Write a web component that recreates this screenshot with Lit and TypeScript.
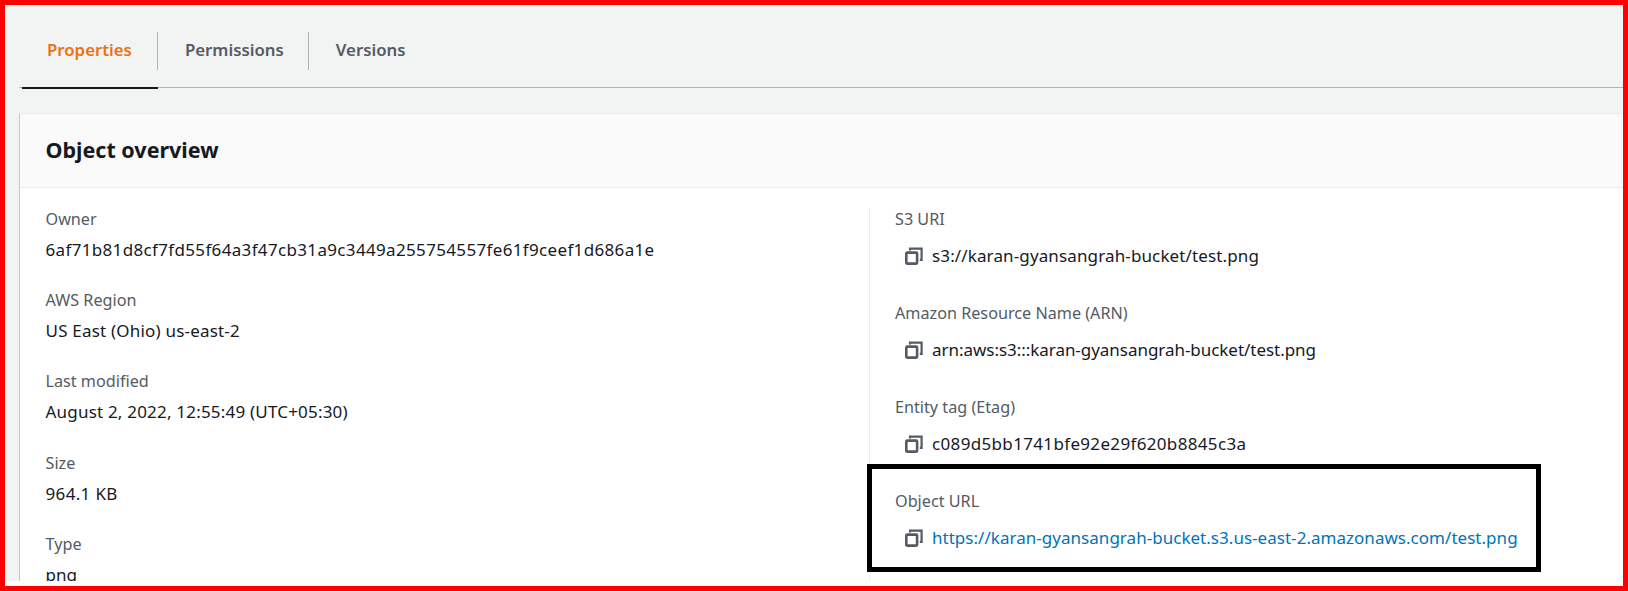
import { LitElement, html, css } from "lit";
import { customElement } from "lit/decorators.js";

const copyIcon = html`<svg class="copy" viewBox="0 0 18 18" width="18" height="18" fill="none" stroke="#545b64">
  <rect x="1.3" y="5.6" width="10.8" height="11" rx="1" stroke-width="2.6"></rect>
  <path d="M5 3.4V1.6h11.6V12.8h-1.8" stroke-width="2.2"></path>
</svg>`;

const left = [
  ["Owner", "6af71b81d8cf7fd55f64a3f47cb31a9c3449a255754557fe61f9ceef1d686a1e", "wide"],
  ["AWS Region", "US East (Ohio) us-east-2", "mid"],
  ["Last modified", "August 2, 2022, 12:55:49 (UTC+05:30)", "mid"],
  ["Size", "964.1 KB", "wide"],
  ["Type", "png", ""],
];
const right = [
  ["S3 URI", "s3://karan-gyansangrah-bucket/test.png", "slight", false],
  ["Amazon Resource Name (ARN)", "arn:aws:s3:::karan-gyansangrah-bucket/test.png", "tight", false],
  ["Entity tag (Etag)", "c089d5bb1741bfe92e29f620b8845c3a", "wide", false],
  ["Object URL", "https://karan-gyansangrah-bucket.s3.us-east-2.amazonaws.com/test.png", "", true],
] as const;

@customElement("app-root")
export class AppRoot extends LitElement {
  static styles = css`
    :host {
      display: block;
      font-family: "Noto Sans", "Open Sans", sans-serif;
      font-size: 17px;
      line-height: 22px;
      color: #16191f;
    }
    .frame {
      position: relative;
      box-sizing: border-box;
      width: 1628px;
      height: 591px;
      border: 5px solid #ff0000;
      background: #ffffff;
      overflow: hidden;
    }
    .panel {
      height: 576px;
      background: #f2f3f3;
      overflow: hidden;
      padding-left: 14px;
    }
    .tabs {
      display: flex;
      height: 82px;
      padding-left: 3px;
      border-bottom: 1px solid #aab7b8;
    }
    .tab {
      padding-top: 27px;
      height: 55px;
      border-bottom: 2px solid transparent;
    }
    .tab.active { border-bottom-color: #16191f; }
    .tab span {
      display: flex;
      align-items: center;
      box-sizing: border-box;
      height: 38px;
      padding: 0 24px 2px 27px;
      font-size: 16.8px;
      font-weight: 600;
      color: #545b64;
      border-right: 1px solid #aab7b8;
    }
    .tab.active span { color: #ec7211; padding-left: 25px; padding-right: 25px; }
    .tab:last-child span { border-right: none; }
    .card {
      margin-top: 25px;
      height: 468px;
      background: #ffffff;
      border-left: 1px solid #c6caca;
      border-top: 1px solid #eaeded;
      box-sizing: border-box;
    }
    .head {
      display: flex;
      align-items: center;
      box-sizing: border-box;
      height: 74px;
      padding-left: 25.5px;
      padding-bottom: 1px;
      background: #fafafa;
      border-bottom: 1px solid #eaeded;
      font-size: 21.5px;
      font-weight: 700;
    }
    .body {
      display: grid;
      grid-template-columns: 849px 1fr;
      padding-top: 20px;
      height: 373px;
    }
    .col-l { padding-left: 25.5px; }
    .col-r { border-left: 1px solid #eaeded; padding-left: 25px; }
    .label { color: #545b64; font-size: 16.2px; }
    .col-l .field { margin-bottom: 28.2px; }
    .col-l .value { margin-top: 9px; }
    .col-r .field { margin-bottom: 35px; }
    .col-r .value {
      display: flex;
      align-items: center;
      gap: 9px;
      margin-top: 15px;
      padding-left: 10px;
    }
    .wide { letter-spacing: 0.34px; }
    .mid { letter-spacing: 0.2px; }
    .slight { letter-spacing: 0.13px; }
    .tight { letter-spacing: -0.04px; }
    .copy { flex: none; }
    a { color: #0073bb; text-decoration: none; letter-spacing: 0.03px; }
    .mark {
      position: absolute;
      left: 862px;
      top: 459px;
      width: 674px;
      height: 108px;
      box-sizing: border-box;
      border: 5px solid #000000;
    }
  `;

  render() {
    return html`<div class="frame">
      <div class="panel">
        <div class="tabs">
          <div class="tab active"><span>Properties</span></div>
          <div class="tab"><span>Permissions</span></div>
          <div class="tab"><span>Versions</span></div>
        </div>
        <div class="card">
          <div class="head">Object overview</div>
          <div class="body">
            <div class="col-l">
              ${left.map(
                ([l, v, cls]) => html`<div class="field"><div class="label">${l}</div><div class="value ${cls}">${v}</div></div>`
              )}
            </div>
            <div class="col-r">
              ${right.map(
                ([l, v, cls, link]) => html`<div class="field">
                  <div class="label">${l}</div>
                  <div class="value ${cls}">${copyIcon}${link ? html`<a href="#">${v}</a>` : html`<span>${v}</span>`}</div>
                </div>`
              )}
            </div>
          </div>
        </div>
      </div>
      <div class="mark"></div>
    </div>`;
  }
}
